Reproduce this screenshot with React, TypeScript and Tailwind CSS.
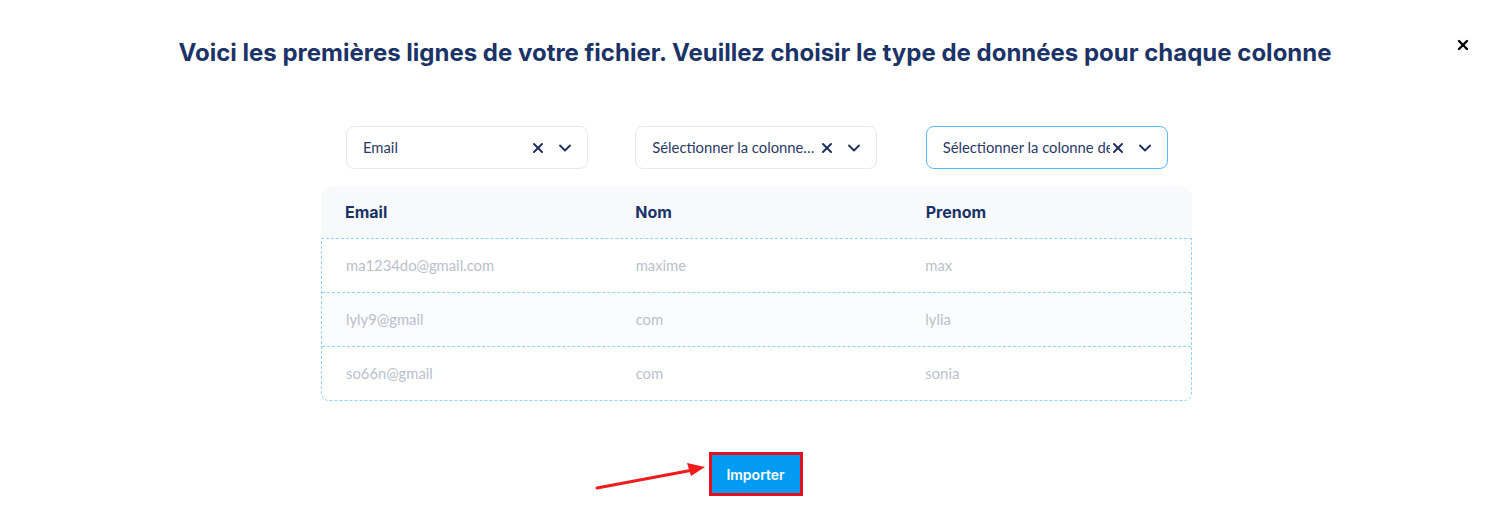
import { X, ChevronDown } from "lucide-react";

const rows = [
  ["ma1234do@gmail.com", "maxime", "max"],
  ["lyly9@gmail", "com", "lylia"],
  ["so66n@gmail", "com", "sonia"],
];

function Select({ label, active }: { label: string; active?: boolean }) {
  return (
    <div
      className={`flex h-[43px] w-[242px] items-center rounded-lg border bg-white pl-4 pr-3 ${
        active ? "border-[#5ab8f5]" : "border-[#e4e8ef]"
      }`}
    >
      <span className="min-w-0 flex-1 overflow-hidden whitespace-nowrap text-[14.8px] text-[#2a3a66] [font-family:Lato,sans-serif]">{label}</span>
      <X size={16} strokeWidth={3} className="shrink-0 text-[#1c2f5e]" />
      <ChevronDown size={20} strokeWidth={2.2} className="ml-[9px] shrink-0 text-[#1c2f5e]" />
    </div>
  );
}

export default function App() {
  return (
    <div className="relative h-[532px] w-[1510px] bg-white [font-family:Inter,sans-serif]">
      <button className="absolute right-[39px] top-[37px] text-black">
        <X size={16} strokeWidth={3.5} />
      </button>
      <h1 className="pt-[37px] text-center text-[24px] font-bold leading-[32px] tracking-[0px] text-[#1b3366]">
        Voici les premières lignes de votre fichier. Veuillez choisir le type de données pour chaque colonne
      </h1>

      <div className="ml-[321px] mt-[57px] w-[871px]">
        <div className="grid grid-cols-3">
          <div className="pl-[25px]"><Select label="Email" /></div>
          <div className="pl-6"><Select label="Sélectionner la colonne…" /></div>
          <div className="pl-6"><Select label="Sélectionner la colonne de données" active /></div>
        </div>

        <div className="mt-[17px]">
          <div className="grid h-[52px] grid-cols-3 items-center rounded-t-xl bg-[#f8f9fb] text-[16px] font-bold text-[#1b3366]">
            <div className="pl-6">Email</div>
            <div className="pl-6">Nom</div>
            <div className="pl-6">Prenom</div>
          </div>
          <div className="overflow-hidden rounded-b-lg border border-dashed border-[#8fd3fb]">
            {rows.map((r, i) => (
              <div
                key={i}
                className={`grid grid-cols-3 items-center text-[14.8px] text-[#b9bfcc] [font-family:Lato,sans-serif] ${
                  i > 0 ? "h-[54px] border-t border-dashed border-[#8fd3fb]" : "h-[53px]"
                } ${i === 1 ? "bg-[#fbfcfd]" : "bg-white"}`}
              >
                {r.map((c, j) => (
                  <div key={j} className="pl-[24px]">{c}</div>
                ))}
              </div>
            ))}
          </div>
        </div>
      </div>

      <div className="mt-[51px] flex justify-center">
        <div className="relative ml-[1px]">
          <svg className="absolute -left-[116px] top-[10px]" width="116" height="30" viewBox="0 0 116 30">
            <line x1="4" y1="26" x2="100" y2="8" stroke="#ee1c1c" strokeWidth="3" strokeLinecap="round" />
            <polygon points="112,5 94,1 98,14" fill="#ee1c1c" />
          </svg>
          <button className="flex h-[44px] w-[94px] items-center justify-center border-[3px] border-[#e50f1e] bg-[#039cf2] text-[14px] font-semibold text-white [font-family:Inter,sans-serif]">
            Importer
          </button>
        </div>
      </div>
    </div>
  );
}
